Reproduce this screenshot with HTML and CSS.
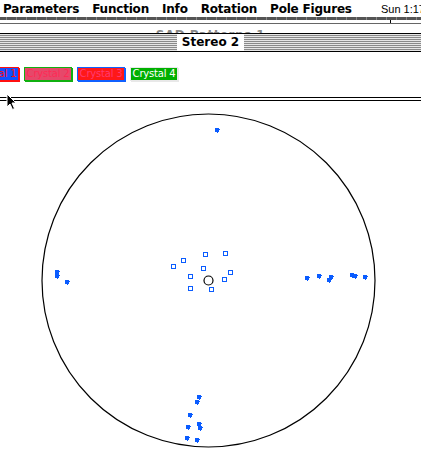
FILE: index.html
```html
<!DOCTYPE html>
<html lang="en">
<head>
    <meta charset="UTF-8">
    <meta name="viewport" content="width=device-width, initial-scale=1.0">
    <title>Stereo 2</title>
    <link rel="stylesheet" href="styles.css">
</head>
<body>
    <div class="menubar">
        <nav class="menus">
            <span>Parameters</span>
            <span>Function</span>
            <span>Info</span>
            <span>Rotation</span>
            <span>Pole Figures</span>
        </nav>
        <span class="clock">Sun 1:17</span>
    </div>

    <div class="back-window">
        <div class="back-frame"></div>
        <div class="back-title"><span>SAD Patterns 1</span></div>
    </div>

    <div class="window">
        <div class="titlebar"><span class="title">Stereo 2</span></div>
        <div class="content">
            <div class="legend">
                <span class="crystal c1">Crystal 1</span>
                <span class="crystal c2">Crystal 2</span>
                <span class="crystal c3">Crystal 3</span>
                <span class="crystal c4">Crystal 4</span>
            </div>
            <div class="divider"></div>

            <!-- stereographic projection, coordinates in screen pixels -->
            <svg class="plot" width="421" height="354" viewBox="0 102 421 354">
                <circle cx="208.5" cy="281.5" r="166.5" fill="none" stroke="#000" stroke-width="1.2"/>
                <circle cx="208.5" cy="281.5" r="4.5" fill="none" stroke="#000" stroke-width="1.2"/>
            </svg>
        </div>
    </div>

    <svg class="cursor" width="12" height="18" viewBox="0 0 12 18">
        <path d="M1 1 L1 14 L4 11 L6.5 16.5 L8.5 15.5 L6 10 L10 10 Z" fill="#000" stroke="#fff" stroke-width="1"/>
    </svg>

    <script>
        const svg = document.querySelector('.plot');
        const ns = 'http://www.w3.org/2000/svg';
        const blue = '#0a5cff';

        // open squares near the centre
        const openPoles = [
            [203, 253], [223, 252], [171, 265], [181, 259], [201, 267],
            [228, 271], [188, 275], [222, 278], [188, 287], [209, 288]
        ];
        openPoles.forEach(([x, y]) => {
            const p = document.createElementNS(ns, 'path');
            p.setAttribute('d', `M${x} ${y}h5v5h-5z M${x + 1} ${y + 1}v3h3v-3z`);
            p.setAttribute('fill', blue);
            p.setAttribute('fill-rule', 'evenodd');
            svg.appendChild(p);
        });

        // filled poles: small blob with a one pixel tail
        const poles = [
            [217, 131],
            [307, 279], [319, 277], [331, 278], [329, 281], [352, 276], [355, 277], [365, 278],
            [57, 273], [57, 277], [67, 283],
            [199, 398], [197, 403], [190, 416], [188, 428], [199, 425], [200, 429], [187, 439], [197, 441]
        ];
        poles.forEach(([x, y]) => {
            const p = document.createElementNS(ns, 'path');
            p.setAttribute('d', `M${x - 2} ${y - 2}h4v1h1v1h-1v2h-1v1h-1v-1h-2z`);
            p.setAttribute('fill', blue);
            svg.appendChild(p);
        });
    </script>
</body>
</html>
```

FILE: styles.css
```css
body {
    margin: 0;
    width: 421px;
    height: 456px;
    overflow: hidden;
    background-color: #fff;
    font-family: "DejaVu Sans", Verdana, sans-serif;
    position: relative;
}

.menubar {
    height: 17px;
    display: flex;
    align-items: center;
    justify-content: space-between;
    white-space: nowrap;
}
.menus {
    display: flex;
    gap: 13px;
    padding-left: 3px;
    font-weight: bold;
    font-size: 12px;
    letter-spacing: -0.2px;
}
.clock {
    font-family: "Liberation Sans", Arial, sans-serif;
    font-size: 11px;
    margin-right: -4px;
}

.back-frame {
    height: 3px;
    border-bottom: 3px solid #fff;
    background: repeating-linear-gradient(90deg, #555 0 6px, #888 6px 7px, #555 7px 10px);
    position: relative;
}
.back-frame::after {
    content: "";
    position: absolute;
    left: 390px;
    top: 3px;
    width: 1px;
    height: 3px;
    background-color: #000;
}
.back-title {
    height: 9px;
    border-top: 1px solid #666;
    overflow: hidden;
    text-align: center;
}
.back-title span {
    display: inline-block;
    padding-top: 2px;
    line-height: 12px;
    color: #888;
    font-weight: bold;
    font-size: 12px;
    letter-spacing: 0.5px;
}

.window {
    border-top: 1px solid #000;
}
.titlebar {
    height: 17px;
    border-bottom: 1px solid #000;
    background: repeating-linear-gradient(180deg, #e6e6e6 0 1px, #8a8a8a 1px 2px);
    display: flex;
    justify-content: center;
    align-items: center;
}
.title {
    background-color: #fff;
    height: 17px;
    line-height: 17px;
    width: 67px;
    text-align: center;
    font-weight: bold;
    font-size: 12px;
}

.legend {
    display: flex;
    gap: 5px;
    margin: 15px 0 0 -29px;
    height: 15px;
}
.crystal {
    width: 46px;
    height: 12px;
    line-height: 12px;
    font-size: 10px;
    letter-spacing: -0.2px;
    text-align: center;
    white-space: nowrap;
    overflow: hidden;
    border: 1px solid;
}
.c1 {
    background-color: #1050ff;
    color: #ff1010;
    border-color: #ff1010;
    box-shadow: 1px 1px 0 #ff1010;
}
.c2 {
    background-color: #e6486a;
    color: #ff2a55;
    border-color: #10b010;
    box-shadow: 1px 1px 0 #10b010;
}
.c3 {
    background-color: #ff1818;
    color: #ff3a70;
    border-color: #1060ff;
    box-shadow: 1px 1px 0 #1060ff;
}
.c4 {
    background-color: #00b000;
    color: #fff;
    border-color: #e8e8e8;
    box-shadow: 1px 1px 0 #e8e8e8;
}

.divider {
    margin-top: 15px;
    height: 2px;
    border-top: 1px solid #000;
    border-bottom: 1px solid #000;
}

.plot {
    display: block;
}

.cursor {
    position: absolute;
    left: 6px;
    top: 93px;
}
```
